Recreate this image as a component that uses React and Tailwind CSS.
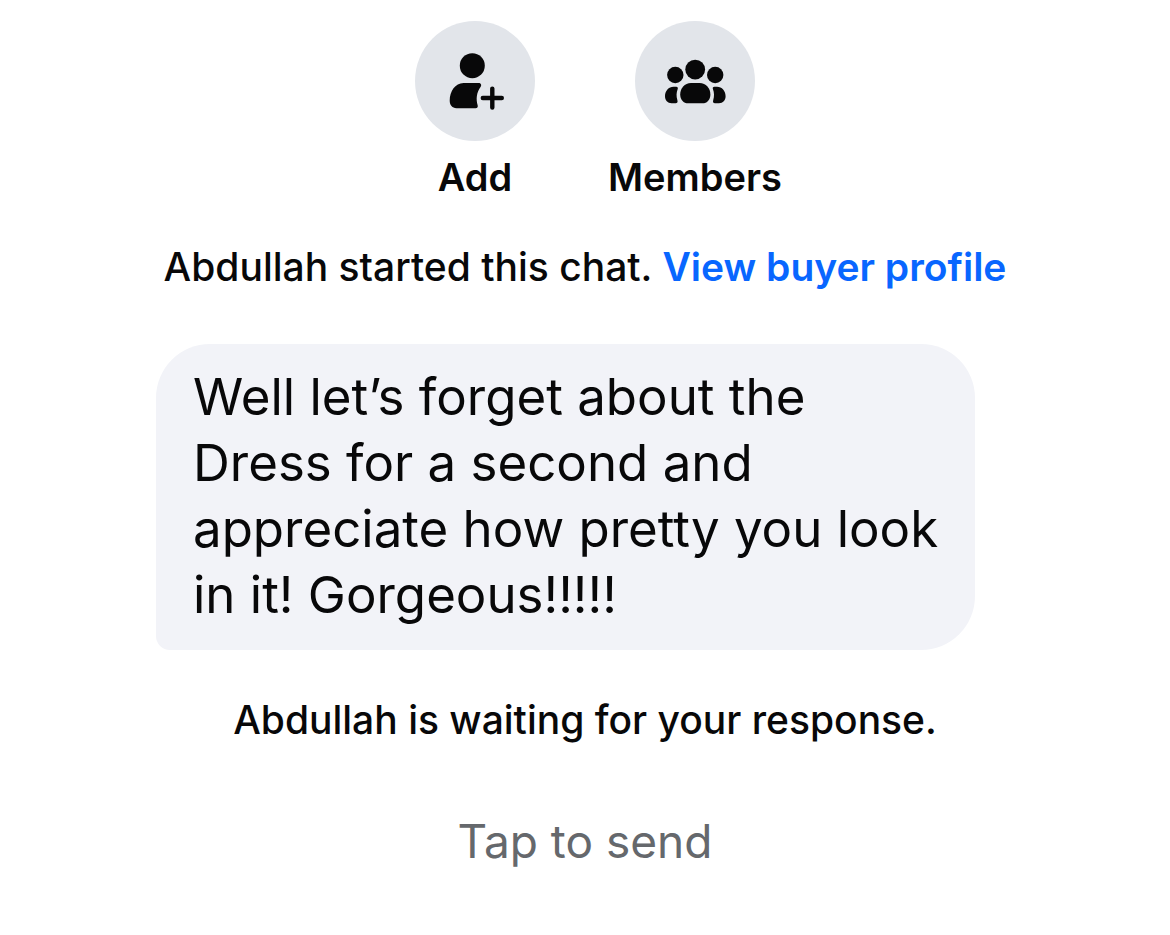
import React from 'react';

const AddIcon = () => (
  <svg viewBox="0 0 120 120" className="w-full h-full" fill="currentColor" aria-hidden="true">
    <circle cx="57.3" cy="44.7" r="12.5" />
    <path d="M48.5 62H63.6C65.9 62 66.8 64 65.7 65.8C61.4 71.6 60.9 78.4 62.7 84.4C63.1 86 62.2 87.2 60.6 87.2H41.5C37.3 87.2 34.7 84.2 34.7 79.6C34.7 70.4 40.2 62 48.5 62Z" />
    <path d="M77.3 67.6V86.6M67.8 77H86.8" fill="none" stroke="currentColor" strokeWidth="4.4" strokeLinecap="round" />
  </svg>
);

const MembersIcon = () => (
  <svg viewBox="0 0 120 120" className="w-full h-full" fill="currentColor" aria-hidden="true">
    <circle cx="60.2" cy="48.6" r="9.9" />
    <circle cx="40.3" cy="54" r="8.2" />
    <circle cx="80.2" cy="54" r="8.2" />
    <path d="M56 62H64.6C71 62 75.4 67.4 75.4 73.4C75.4 78.6 72.2 82.2 67.4 82.2H53.2C48.4 82.2 45.2 78.6 45.2 73.4C45.2 67.4 49.6 62 56 62Z" />
    <path d="M38.6 65.8H41.2C42.6 65.8 43.2 66.8 42.7 68C41.3 71.6 41.2 75.4 42.4 79.2C43 81 42.2 82.2 40.6 82.2H36.6C32.6 82.2 30 79.2 30 75.2C30 70 33.6 65.8 38.6 65.8Z" />
    <path d="M82 65.8H79.4C78 65.8 77.4 66.8 77.9 68C79.3 71.6 79.4 75.4 78.2 79.2C77.6 81 78.4 82.2 80 82.2H84C88 82.2 90.6 79.2 90.6 75.2C90.6 70 87 65.8 82 65.8Z" />
  </svg>
);

const actions = [
  { label: 'Add', icon: AddIcon },
  { label: 'Members', icon: MembersIcon },
];

export default function App() {
  return (
    <main className="min-h-screen bg-white px-6 pt-[21px] pb-10 font-['Inter',sans-serif] text-[#080809]">
      <div className="flex justify-center">
        {actions.map(({ label, icon: Icon }) => (
          <button key={label} type="button" className="w-[220px] flex flex-col items-center gap-3 text-[38px] leading-[48px] font-semibold">
            <span className="w-[120px] h-[120px] rounded-full bg-[#e2e5ea]">
              <Icon />
            </span>
            {label}
          </button>
        ))}
      </div>

      <p className="mt-[42px] text-center text-[39px] leading-[48px] font-medium">
        Abdullah started this chat.{' '}
        <a href="#profile" className="font-semibold text-[#0866ff]">View buyer profile</a>
      </p>

      {/* Incoming message */}
      <div className="max-w-[858px] mx-auto mt-[53px]">
        <p className="max-w-[819px] rounded-[54px] rounded-bl-[14px] bg-[#f2f3f8] pl-[37px] pr-8 pt-5 pb-[22px] text-[51px] leading-[66px]">
          Well let’s forget about the Dress for a second and appreciate how pretty you look in it! Gorgeous!!!!!
        </p>
      </div>

      <p className="mt-[46px] text-center text-[39px] leading-[48px] font-medium">
        Abdullah is waiting for your response.
      </p>

      <div className="mt-[67px] flex justify-center">
        <button type="button" className="text-[46px] leading-[60px] text-[#65686c]">Tap to send</button>
      </div>
    </main>
  );
}
